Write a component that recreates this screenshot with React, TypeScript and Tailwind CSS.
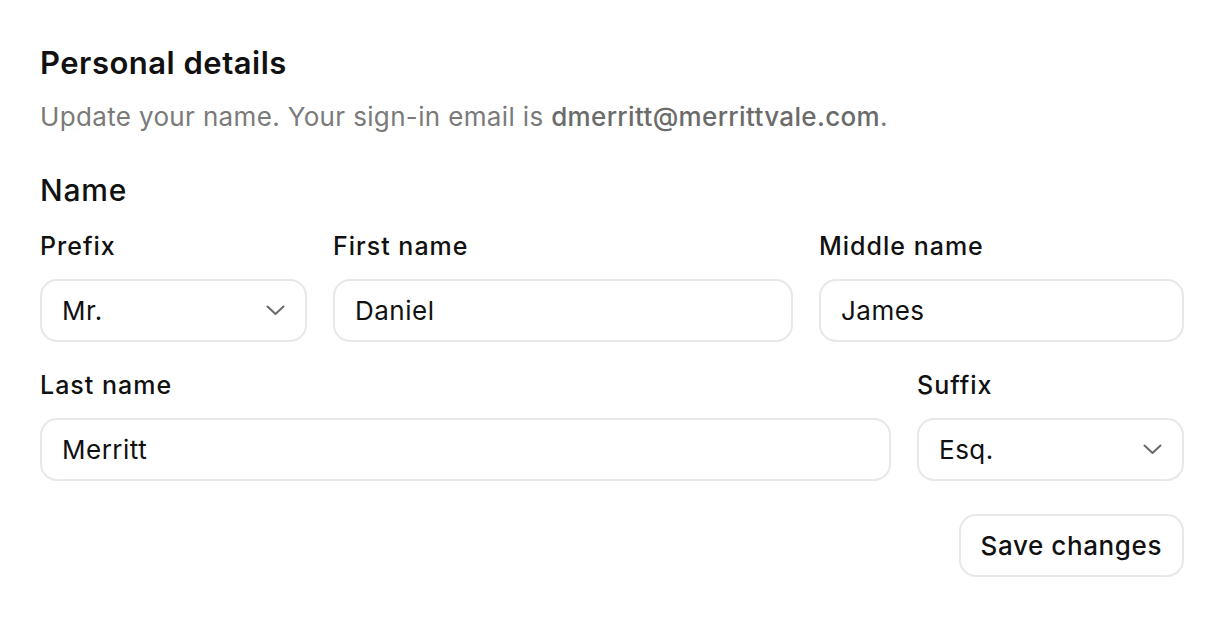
import React from 'react';

const font = { fontFamily: 'Inter, "Noto Sans", sans-serif' };

const Chevron = () => (
  <svg width="19" height="11" viewBox="0 0 19 11" fill="none" className="text-[#6a6a6a]">
    <polyline points="1.5,1.5 9.5,9 17.5,1.5" stroke="currentColor" strokeWidth="2" strokeLinecap="round" strokeLinejoin="round" />
  </svg>
);

const Label: React.FC<{ children: React.ReactNode }> = ({ children }) => (
  <label className="block text-[25px] leading-[30px] font-medium text-[#111] tracking-[1px]">{children}</label>
);

const TextField: React.FC<{ label: string; value: string }> = ({ label, value }) => (
  <div className="flex flex-col gap-[18px]">
    <Label>{label}</Label>
    <div className="h-[63px] rounded-[17px] border-2 border-[#e8e8e8] bg-white flex items-center px-[20px] text-[26px] text-[#111] tracking-[0.5px]">
      {value}
    </div>
  </div>
);

const SelectField: React.FC<{ label: string; value: string }> = ({ label, value }) => (
  <div className="flex flex-col gap-[18px]">
    <Label>{label}</Label>
    <div className="h-[63px] rounded-[17px] border-2 border-[#e8e8e8] bg-white flex items-center justify-between pl-[20px] pr-[20px] text-[26px] text-[#111] tracking-[0.5px]">
      <span>{value}</span>
      <Chevron />
    </div>
  </div>
);

export default function App() {
  return (
    <div className="min-h-screen bg-white px-[40px] pt-[44px]" style={font}>
      <h2 className="text-[31px] leading-[38px] font-semibold text-[#111] tracking-[0.5px]">Personal details</h2>
      <p className="mt-[19px] text-[26px] leading-[32px] text-[#7a7a7a] tracking-[0.35px]">
        Update your name. Your sign-in email is{' '}
        <span className="font-medium text-[#6b6b6b]">dmerritt@merrittvale.com</span>.
      </p>

      <h3 className="mt-[39px] text-[30px] leading-[36px] font-medium text-[#111] tracking-[0.8px]">Name</h3>

      {/* row 1: prefix / first / middle */}
      <div className="mt-[23px] grid grid-cols-[267px_1fr_365px] gap-[26px]">
        <SelectField label="Prefix" value="Mr." />
        <TextField label="First name" value="Daniel" />
        <TextField label="Middle name" value="James" />
      </div>

      {/* row 2: last / suffix */}
      <div className="mt-[28px] grid grid-cols-[1fr_267px] gap-[26px]">
        <TextField label="Last name" value="Merritt" />
        <SelectField label="Suffix" value="Esq." />
      </div>

      <div className="mt-[33px] flex justify-end">
        <button className="h-[63px] px-[20px] rounded-[17px] border-2 border-[#e8e8e8] bg-white text-[26px] font-medium text-[#111] tracking-[0.6px]">
          Save changes
        </button>
      </div>
    </div>
  );
}
